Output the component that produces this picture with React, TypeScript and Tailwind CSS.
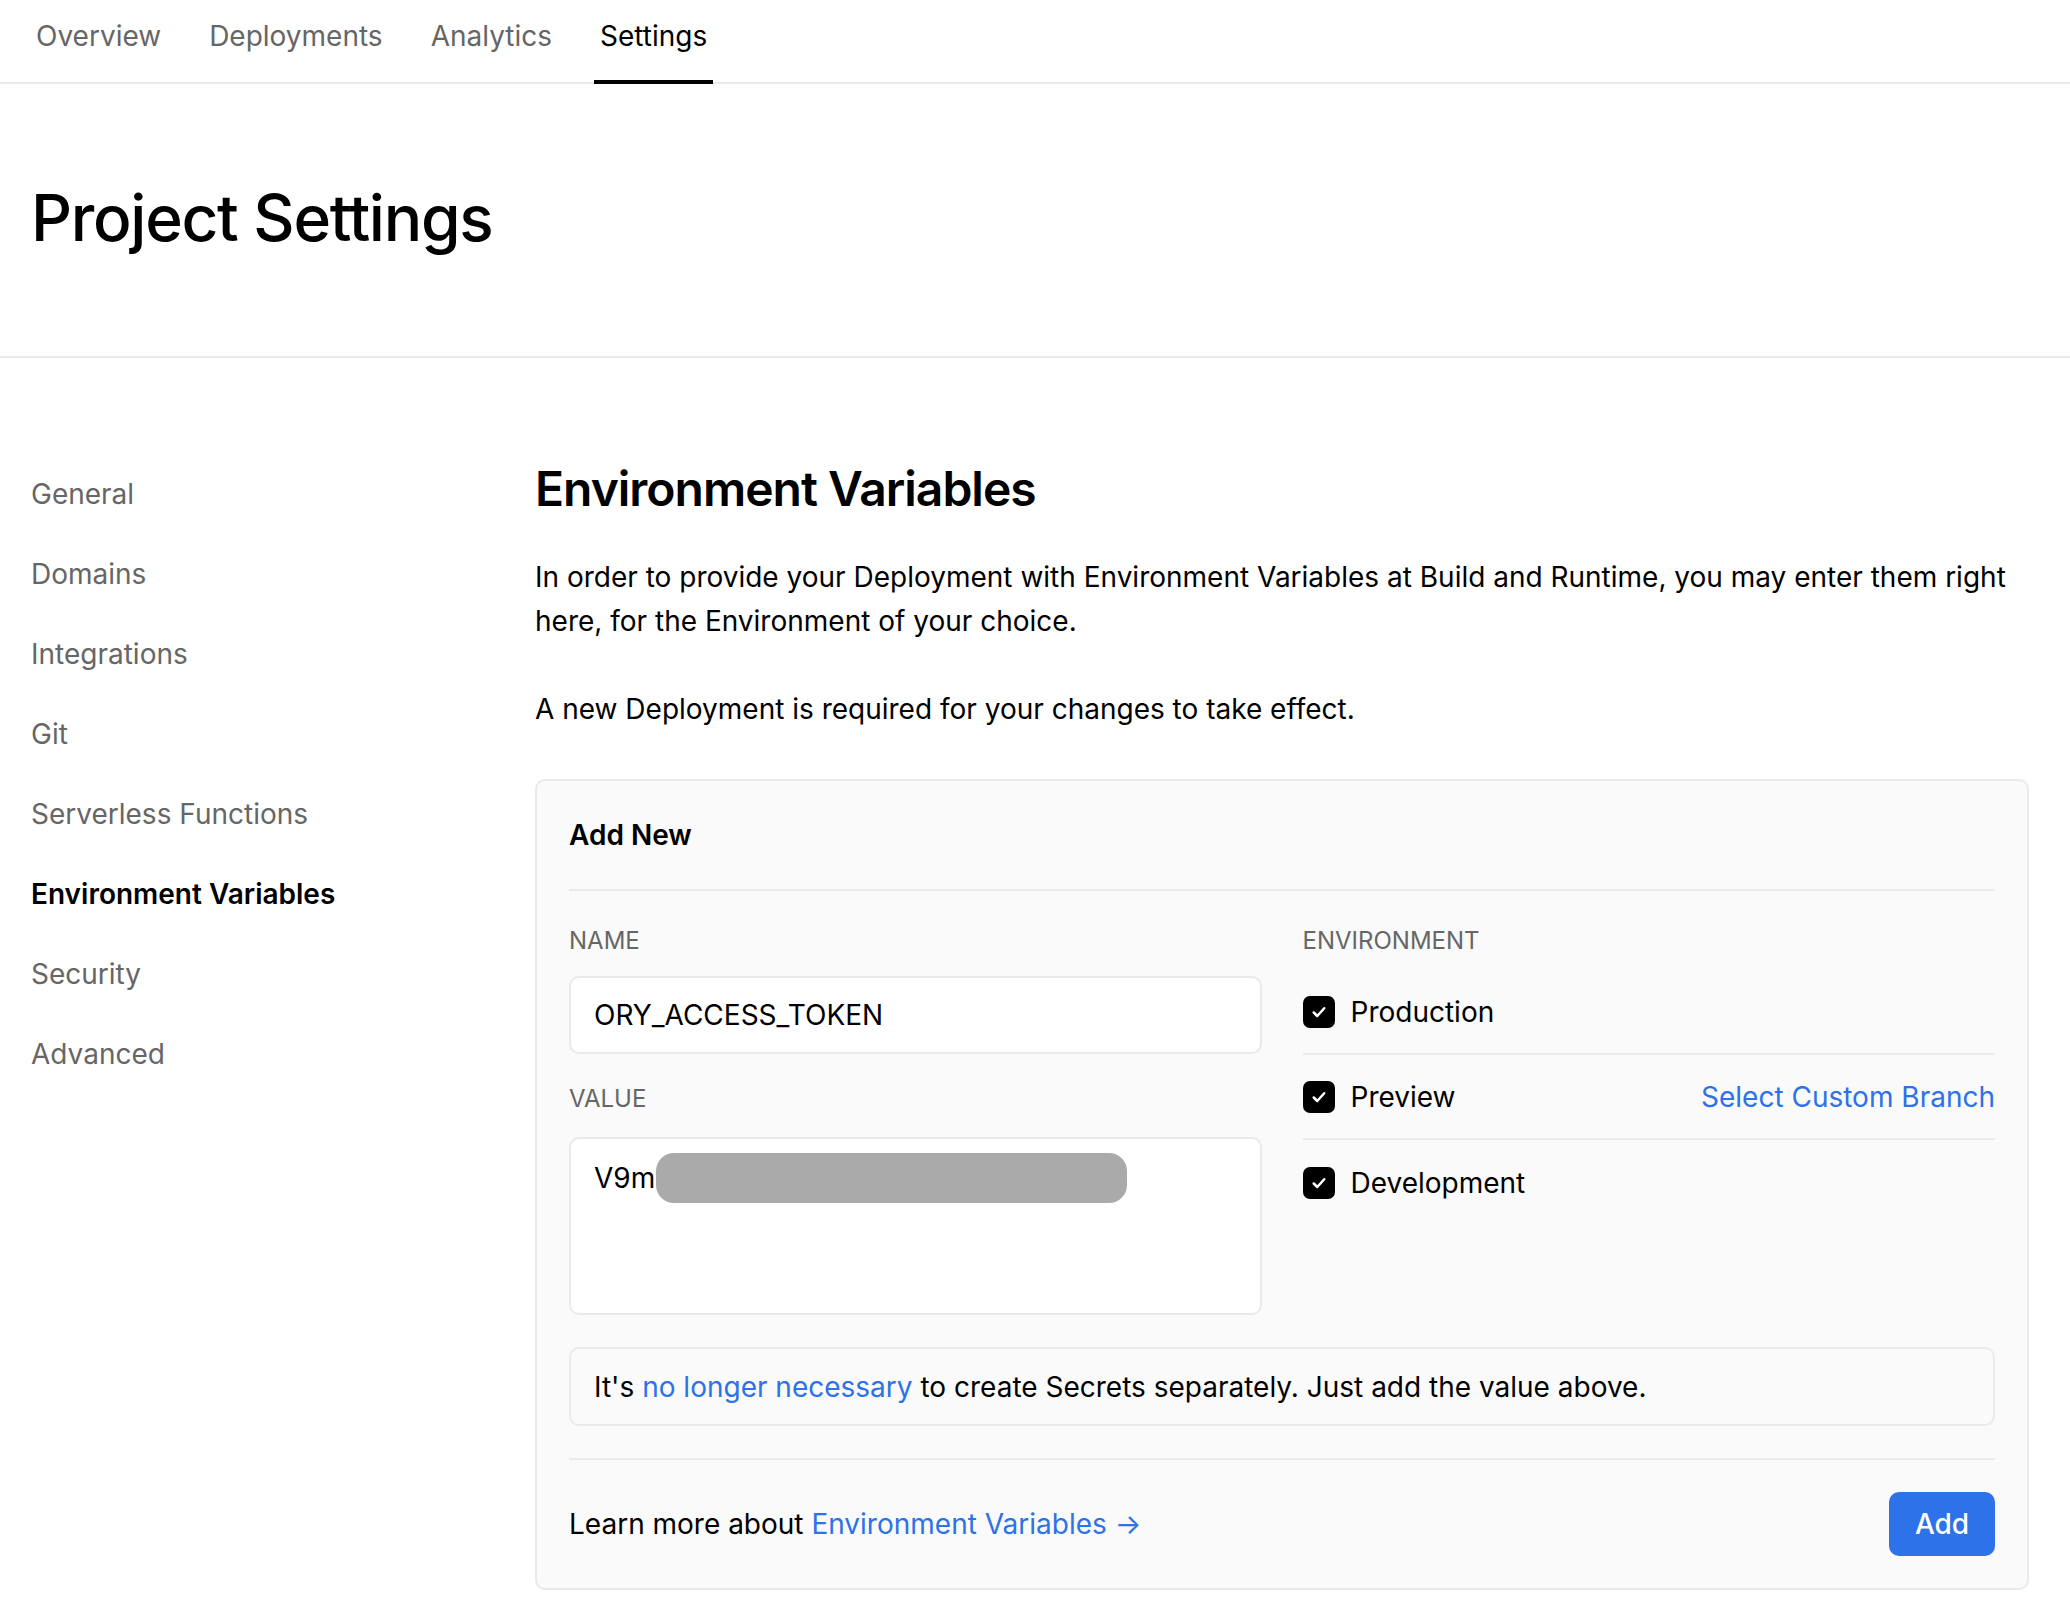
import React from "react";

const tabs = ["Overview", "Deployments", "Analytics", "Settings"];

const navItems = [
  "General",
  "Domains",
  "Integrations",
  "Git",
  "Serverless Functions",
  "Environment Variables",
  "Security",
  "Advanced",
];

const Checkbox: React.FC = () => (
  <span className="w-[32px] h-[32px] rounded-[7px] bg-black flex items-center justify-center shrink-0">
    <svg viewBox="0 0 16 16" className="w-[20px] h-[20px]" fill="none">
      <path d="M3.8 8.4 L6.6 11.2 L12.2 5" stroke="white" strokeWidth="2" strokeLinecap="round" strokeLinejoin="round" />
    </svg>
  </span>
);

export default function App() {
  const envs = [
    { name: "Production", branch: false },
    { name: "Preview", branch: true },
    { name: "Development", branch: false },
  ];

  return (
    <div className="min-h-screen bg-white text-black font-['Inter','Liberation_Sans',sans-serif]">
      {/* Top tabs */}
      <div className="h-[84px] border-b-2 border-[#eaeaea] px-[30px] flex items-end gap-[36px]">
        {tabs.map((t) => {
          const active = t === "Settings";
          return (
            <div
              key={t}
              className={`relative h-full flex items-start pt-[16px] px-[6px] text-[28px] leading-[40px] ${
                active ? "text-black" : "text-[#666]"
              }`}
            >
              {t}
              {active && <span className="absolute left-0 right-0 -bottom-[2px] h-[4px] bg-black" />}
            </div>
          );
        })}
      </div>

      {/* Title */}
      <div className="h-[274px] border-b-2 border-[#eaeaea] px-[31px] flex items-center">
        <h1 className="text-[64px] leading-[80px] font-medium tracking-[-1.3px] pb-[4px]">Project Settings</h1>
      </div>

      {/* Body */}
      <div className="flex pl-[31px] pr-[41px] pt-[96px] pb-[20px]">
        <nav className="w-[504px] shrink-0 flex flex-col">
          {navItems.map((n) => {
            const active = n === "Environment Variables";
            return (
              <div
                key={n}
                className={`h-[80px] leading-[80px] text-[28px] ${
                  active ? "text-black font-semibold" : "text-[#666]"
                }`}
              >
                {n}
              </div>
            );
          })}
        </nav>

        <main className="flex-1 pt-[5px]">
          <h2 className="text-[48px] leading-[60px] font-semibold tracking-[-1px]">Environment Variables</h2>
          <p className="mt-[36px] text-[28px] leading-[44px]">
            In order to provide your Deployment with Environment Variables at Build and Runtime, you may enter them right
            here, for the Environment of your choice.
          </p>
          <p className="mt-[44px] text-[28px] leading-[44px]">
            A new Deployment is required for your changes to take effect.
          </p>

          {/* Card */}
          <div className="mt-[48px] rounded-[10px] border-2 border-[#eaeaea] bg-[#fafafa] px-[32px]">
            <div className="pt-[34px] pb-[34px] border-b-2 border-[#eaeaea]">
              <h3 className="text-[28px] leading-[40px] font-semibold">Add New</h3>
            </div>

            <div className="grid grid-cols-2 gap-[41px] pt-[34px]">
              <div className="flex flex-col">
                <label className="text-[24px] leading-[32px] text-[#666] uppercase">Name</label>
                <div className="mt-[19px] h-[78px] rounded-[10px] border-2 border-[#eaeaea] bg-white flex items-center px-[23px] text-[28px]">
                  ORY_ACCESS_TOKEN
                </div>
                <label className="mt-[29px] text-[24px] leading-[32px] text-[#666] uppercase">Value</label>
                <div className="mt-[22px] h-[178px] rounded-[10px] border-2 border-[#eaeaea] bg-white px-[23px] pt-[12px] text-[28px] leading-[50px]">
                  <span className="align-middle">V9m</span>
                  <span className="inline-block align-middle w-[471px] h-[50px] rounded-[18px] bg-[#aaaaaa] ml-[1px]" />
                </div>
              </div>

              <div className="flex flex-col">
                <label className="text-[24px] leading-[32px] text-[#666] uppercase">Environment</label>
                <div className="mt-[13px] flex flex-col">
                  {envs.map((e, i) => (
                    <div
                      key={e.name}
                      className={`h-[85px] flex items-center gap-[16px] ${
                        i < envs.length - 1 ? "border-b-2 border-[#eaeaea]" : ""
                      }`}
                    >
                      <Checkbox />
                      <span className="text-[28px] leading-[40px]">{e.name}</span>
                      {e.branch && (
                        <span className="ml-auto text-[28px] leading-[40px] text-[#2d72e8]">Select Custom Branch</span>
                      )}
                    </div>
                  ))}
                </div>
              </div>
            </div>

            <div className="mt-[32px] h-[79px] rounded-[10px] border-2 border-[#eaeaea] bg-[#fafafa] flex items-center px-[23px] text-[28px]">
              <span>
                It's <span className="text-[#2d72e8]">no longer necessary</span> to create Secrets separately. Just add
                the value above.
              </span>
            </div>

            <div className="mt-[32px] border-t-2 border-[#eaeaea] py-[32px] flex items-center justify-between">
              <span className="text-[28px]">
                Learn more about <span className="text-[#2d72e8]">Environment Variables →</span>
              </span>
              <button className="w-[106px] h-[64px] rounded-[10px] bg-[#2d72e8] text-white text-[28px] font-medium">
                Add
              </button>
            </div>
          </div>
        </main>
      </div>
    </div>
  );
}
